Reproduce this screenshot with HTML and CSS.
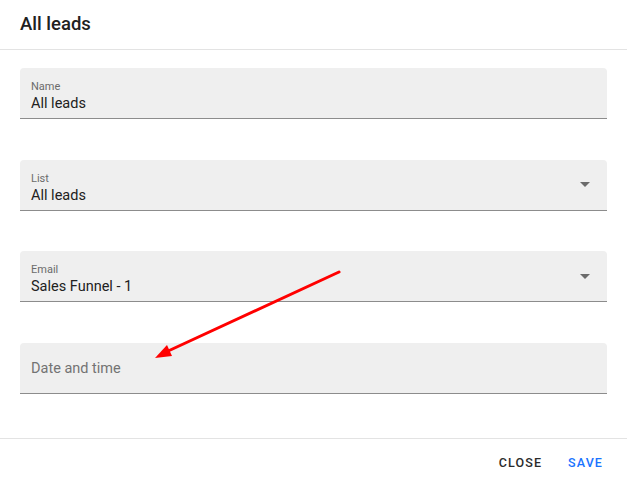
FILE: index.html
```html
<!DOCTYPE html>
<html>
<head>
<meta charset="utf-8">
<link rel="stylesheet" href="styles.css">
</head>
<body>
<div class="dialog">
  <header class="dialog-header">
    <h1 class="dialog-title">All leads</h1>
  </header>
  <main class="dialog-body">
    <div class="field">
      <div class="field-inner">
        <span class="field-label">Name</span>
        <span class="field-value">All leads</span>
      </div>
    </div>
    <div class="field field-select">
      <div class="field-inner">
        <span class="field-label">List</span>
        <span class="field-value">All leads</span>
      </div>
      <span class="caret"></span>
    </div>
    <div class="field field-select">
      <div class="field-inner">
        <span class="field-label">Email</span>
        <span class="field-value">Sales Funnel - 1</span>
      </div>
      <span class="caret"></span>
    </div>
    <div class="field field-empty">
      <div class="field-inner">
        <span class="field-placeholder">Date and time</span>
      </div>
    </div>
  </main>
  <footer class="dialog-footer">
    <button class="btn btn-close">CLOSE</button>
    <button class="btn btn-save">SAVE</button>
  </footer>
  <svg class="annotation" width="627" height="486" viewBox="0 0 627 486">
    <line x1="339" y1="272" x2="166" y2="352" stroke="#ff0000" stroke-width="3" stroke-linecap="round"/>
    <polygon points="155,358 167,345 172,356" fill="#ff0000"/>
  </svg>
</div>
</body>
</html>
```

FILE: styles.css
```css
* { box-sizing: border-box; }
html, body {
  margin: 0;
  padding: 0;
  background: #ffffff;
  font-family: Roboto, "Liberation Sans", sans-serif;
  color: #212121;
}
.dialog {
  position: relative;
  width: 627px;
  height: 486px;
  display: flex;
  flex-direction: column;
}
.dialog-header {
  height: 50px;
  border-bottom: 1px solid #e3e3e3;
  padding: 0 20px;
  display: flex;
  align-items: center;
}
.dialog-title {
  margin: 0;
  font-size: 18.5px;
  font-weight: 500;
  color: #212121;
  line-height: 1;
  padding-bottom: 1px;
}
.dialog-body {
  padding: 18px 20px 44px;
  display: flex;
  flex-direction: column;
  gap: 40.6px;
}
.field {
  position: relative;
  height: 51px;
  width: 587px;
  background: #efefef;
  border-radius: 4px 4px 0 0;
  border-bottom: 1px solid #8c8c8c;
  display: flex;
  align-items: center;
  padding: 0 11px;
}
.field-inner {
  display: flex;
  flex-direction: column;
  flex: 1;
}
.field:not(.field-empty) .field-inner {
  padding-top: 6px;
}
.field-empty .field-inner {
  padding-top: 2px;
}
.field-label {
  font-size: 11px;
  color: #6b6b6b;
  line-height: 13px;
  margin-top: 1px;
}
.field-value {
  font-size: 14.5px;
  color: #212121;
  line-height: 19px;
  margin-top: 1px;
}
.field-placeholder {
  font-size: 14.5px;
  color: #737373;
  line-height: 19px;
}
.caret {
  width: 0;
  height: 0;
  border-left: 5px solid transparent;
  border-right: 5px solid transparent;
  border-top: 5px solid #6b6b6b;
  margin-right: 6px;
}
.dialog-footer {
  flex: 1;
  border-top: 1px solid #e3e3e3;
  display: flex;
  justify-content: flex-end;
  align-items: center;
  padding: 0 16px 0 0;
  gap: 4px;
}
.btn {
  background: none;
  border: none;
  font-family: Roboto, "Liberation Sans", sans-serif;
  font-size: 12.5px;
  font-weight: 500;
  letter-spacing: 1.1px;
  padding: 6px 8px 5px;
  cursor: pointer;
}
.btn-close { color: #2b2b2b; margin-right: 6px; }
.btn-save { color: #1a73ff; }
.annotation {
  position: absolute;
  left: 0;
  top: 0;
  pointer-events: none;
}
```
